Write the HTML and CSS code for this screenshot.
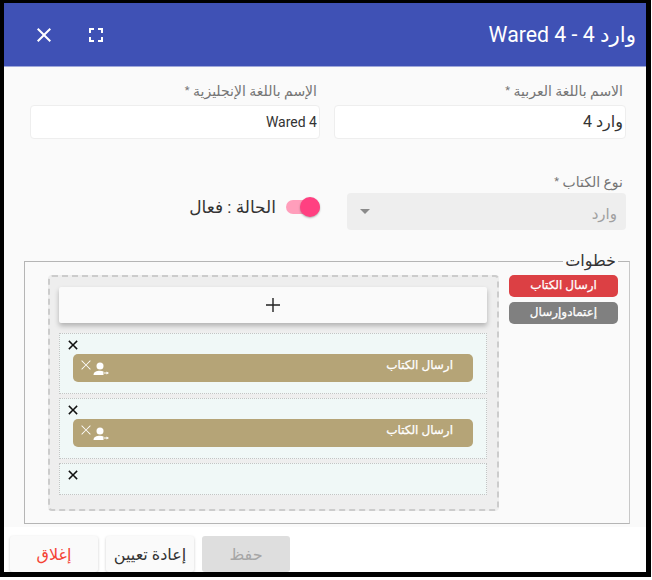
FILE: index.html
```html
<!DOCTYPE html>
<html lang="ar" dir="rtl">
<head>
  <meta charset="UTF-8" />
  <title>وارد 4 - Wared 4</title>
  <link rel="stylesheet" href="styles.css">
</head>
<body>
  <div class="frame">
    <header class="dialog-header">
      <h1 class="dialog-title">وارد 4 - Wared 4</h1>
      <div class="dialog-actions">
        <svg viewBox="0 0 24 24" width="24" height="24"><path fill="#fff" d="M7 14H5v5h5v-2H7v-3zm-2-4h2V7h3V5H5v5zm12 7h-3v2h5v-5h-2v3zM14 5v2h3v3h2V5h-5z"/></svg>
        <svg viewBox="0 0 24 24" width="24" height="24"><path fill="#fff" d="M19 6.410 17.590 5 12 10.590 6.410 5 5 6.410 10.590 12 5 17.590 6.410 19 12 13.410 17.590 19 19 17.590 13.410 12z"/></svg>
      </div>
    </header>

    <div class="dialog-content">
      <div class="form-row">
        <div class="field field-ar">
          <label class="field-label">الاسم باللغة العربية <span class="req">*</span></label>
          <div class="input input-ar">وارد 4</div>
        </div>
        <div class="field field-en">
          <label class="field-label">الإسم باللغة الإنجليزية <span class="req">*</span></label>
          <div class="input"><bdi>Wared 4</bdi></div>
        </div>
      </div>

      <div class="form-row form-row-2">
        <div class="field field-type">
          <label class="field-label">نوع الكتاب <span class="req">*</span></label>
          <div class="select-disabled">
            <span class="select-value">وارد</span>
            <span class="arrow"></span>
          </div>
        </div>
        <div class="toggle-wrap">
          <span class="toggle"><span class="toggle-thumb"></span></span>
          <span class="toggle-text">الحالة : فعال</span>
        </div>
      </div>

      <fieldset class="steps">
        <legend>خطوات</legend>
        <div class="steps-side">
          <div class="chip chip-red">ارسال الكتاب</div>
          <div class="chip chip-gray">إعتمادوإرسال</div>
        </div>
        <div class="drop-area">
          <div class="add-btn">
            <svg viewBox="0 0 24 24" width="24" height="24"><path fill="#212121" d="M19 12.700h-6.300V19h-1.400v-6.300H5v-1.400h6.300V5h1.400v6.300H19z"/></svg>
          </div>

          <div class="slot">
            <svg class="slot-x" viewBox="0 0 24 24" width="14" height="14"><path fill="#111" d="M20 5.800 18.200 4 12 10.200 5.800 4 4 5.800 10.200 12 4 18.200 5.800 20 12 13.800 18.200 20 20 18.200 13.800 12z"/></svg>
            <div class="step-card">
              <span class="step-name">ارسال الكتاب</span>
              <span class="step-icons">
                <svg class="icon-user" viewBox="0 0 16 14" width="16" height="14"><circle fill="#fff" cx="7" cy="4" r="3.500"/><path fill="#fff" d="M.5 13c0-3 3-4.200 6.500-4.200 1.300 0 2.500.2 3.500.6V13z"/><path fill="#fff" d="M11 10.500h2.500v-1l2.500 1.500-2.500 1.500v-1H11z"/></svg>
                <svg class="icon-x" viewBox="0 0 24 24" width="14" height="14"><path fill="#fff" d="M20 5 19 4 12 11 5 4 4 5 11 12 4 19 5 20 12 13 19 20 20 19 13 12z"/></svg>
              </span>
            </div>
          </div>

          <div class="slot">
            <svg class="slot-x" viewBox="0 0 24 24" width="14" height="14"><path fill="#111" d="M20 5.800 18.200 4 12 10.200 5.800 4 4 5.800 10.200 12 4 18.200 5.800 20 12 13.800 18.200 20 20 18.200 13.800 12z"/></svg>
            <div class="step-card">
              <span class="step-name">ارسال الكتاب</span>
              <span class="step-icons">
                <svg class="icon-user" viewBox="0 0 16 14" width="16" height="14"><circle fill="#fff" cx="7" cy="4" r="3.500"/><path fill="#fff" d="M.5 13c0-3 3-4.200 6.500-4.200 1.300 0 2.500.2 3.500.6V13z"/><path fill="#fff" d="M11 10.500h2.500v-1l2.500 1.500-2.500 1.500v-1H11z"/></svg>
                <svg class="icon-x" viewBox="0 0 24 24" width="14" height="14"><path fill="#fff" d="M20 5 19 4 12 11 5 4 4 5 11 12 4 19 5 20 12 13 19 20 20 19 13 12z"/></svg>
              </span>
            </div>
          </div>

          <div class="slot slot-empty">
            <svg class="slot-x" viewBox="0 0 24 24" width="14" height="14"><path fill="#111" d="M20 5.800 18.200 4 12 10.200 5.800 4 4 5.800 10.200 12 4 18.200 5.800 20 12 13.800 18.200 20 20 18.200 13.800 12z"/></svg>
          </div>
        </div>
      </fieldset>
    </div>

    <footer class="dialog-footer">
      <button class="btn btn-save">حفظ</button>
      <button class="btn">إعادة تعيين</button>
      <button class="btn btn-close">إغلاق</button>
    </footer>
  </div>
</body>
</html>
```

FILE: styles.css
```css
html, body {
  margin: 0;
  height: 580px;
  overflow: hidden;
  background: #fff;
}

body {
  font-family: Roboto, "DejaVu Sans", sans-serif;
  color: #333;
}

.frame {
  width: 651px;
  height: 577px;
  box-sizing: border-box;
  margin-right: 1px;
  padding: 3px 5px 0 4px;
  background: #000;
}

.dialog-header {
  height: 64px;
  box-sizing: border-box;
  background: #3f51b5;
  border-bottom: 1px solid #9fa8da;
  display: flex;
  align-items: center;
  justify-content: space-between;
  padding: 0 10px 0 28px;
}

.dialog-title {
  margin: 0;
  font-size: 21.3px;
  font-weight: 400;
  color: #fff;
}

.dialog-actions {
  display: flex;
  align-items: center;
  gap: 28px;
}

.dialog-content {
  height: 460px;
  box-sizing: border-box;
  background: #fafafa;
  padding: 16px 16px 0 20px;
}

.form-row {
  display: flex;
  gap: 14px;
  padding: 0 4px 0 6px;
}

.field-ar {
  width: 292px;
}

.field-en {
  width: 290px;
}

.field-label {
  display: block;
  height: 22px;
  padding-right: 3px;
  font-size: 14px;
  line-height: 16px;
  color: #757575;
}

.req {
  font-size: 11px;
  vertical-align: 2px;
}

.input {
  height: 34px;
  box-sizing: border-box;
  line-height: 32px;
  background: #fff;
  border: 1px solid #eee;
  border-radius: 4px;
  padding: 0 2px;
  font-size: 14px;
}

.input-ar {
  font-size: 16px;
}

.form-row-2 {
  margin-top: 35px;
  align-items: flex-end;
  gap: 27px;
}

.field-type {
  width: 279px;
}

.field-type .field-label {
  height: 19px;
}

.select-disabled {
  height: 37px;
  background: #eee;
  border-radius: 4px;
  display: flex;
  align-items: center;
  justify-content: space-between;
  padding: 0 9px 0 13px;
}

.select-value {
  font-size: 15px;
  color: #a0a0a0;
  padding-top: 4px;
}

.arrow {
  width: 0;
  height: 0;
  border-left: 5px solid transparent;
  border-right: 5px solid transparent;
  border-top: 5px solid #8a8a8a;
}

.toggle-wrap {
  display: flex;
  align-items: center;
  gap: 10px;
  height: 46px;
}

.toggle {
  position: relative;
  display: block;
  width: 34px;
  height: 14px;
  background: #ff9ebb;
  border-radius: 7px;
}

.toggle-thumb {
  position: absolute;
  left: 14px;
  top: -3px;
  width: 20px;
  height: 20px;
  border-radius: 50%;
  background: #ff4081;
  box-shadow: 0 1px 2px rgba(0, 0, 0, .3);
}

.toggle-text {
  font-size: 17px;
}

.steps {
  display: flex;
  height: 272px;
  box-sizing: border-box;
  margin: 22px 0 0;
  padding: 5px 11px 0 23px;
  border: 1px solid #b5b5b5;
  border-right-color: #c8c8c8;
  gap: 10px;
  min-width: 0;
}

.steps legend {
  padding: 0 2px;
  font-size: 16px;
  line-height: 18px;
}

.steps-side {
  width: 109px;
  flex: none;
  display: flex;
  flex-direction: column;
  gap: 5px;
}

.chip {
  height: 22px;
  line-height: 21px;
  border-radius: 5px;
  text-align: center;
  font-size: 12px;
  -webkit-text-stroke: .25px #fff;
  color: #fff;
}

.chip-red {
  background: #dc4044;
}

.chip-gray {
  background: #808080;
}

.drop-area {
  width: 451px;
  height: 236px;
  box-sizing: border-box;
  background: #eee;
  border: 2px dashed #ccc;
  border-radius: 4px;
  padding: 10px 10px 0 9px;
}

.add-btn {
  height: 36px;
  display: flex;
  align-items: center;
  justify-content: center;
  background: #fafafa;
  border-radius: 2px;
  box-shadow: 0 3px 5px rgba(0, 0, 0, .25);
  margin-bottom: 10px;
}

.slot {
  height: 61px;
  box-sizing: border-box;
  background: #f0f8f7;
  border: 1px dotted #c4c4c4;
  padding: 4px 13px 0 6px;
  margin-bottom: 4px;
}

.slot-empty {
  height: 32px;
}

.slot-x {
  display: block;
  margin-right: auto;
}

.step-card {
  height: 28px;
  margin: 2px 0 0 7px;
  display: flex;
  justify-content: space-between;
  background: #b5a477;
  border-radius: 5px;
  padding: 0 20px 0 6px;
}

.step-name {
  font-size: 12px;
  -webkit-text-stroke: .25px #fff;
  line-height: 16px;
  padding-top: 3px;
  color: #fff;
}

.step-icons {
  display: flex;
  align-items: flex-start;
}

.icon-user {
  margin-top: 8px;
}

.icon-x {
  margin-top: 4px;
}

.dialog-footer {
  height: 45px;
  box-sizing: border-box;
  background: #fff;
  display: flex;
  justify-content: flex-end;
  gap: 8px;
  padding: 9px 0 0 6px;
}

.btn {
  width: 88px;
  height: 36px;
  border: 0;
  border-radius: 3px;
  background: #fafafa;
  box-shadow: 0 1px 3px rgba(0, 0, 0, .2);
  font-family: Roboto, "DejaVu Sans", sans-serif;
  font-size: 16px;
  color: #333;
  padding: 0;
}

.btn-save {
  background: #dedede;
  box-shadow: none;
  color: #a6a6a6;
}

.btn-close {
  color: #f44336;
}
```
